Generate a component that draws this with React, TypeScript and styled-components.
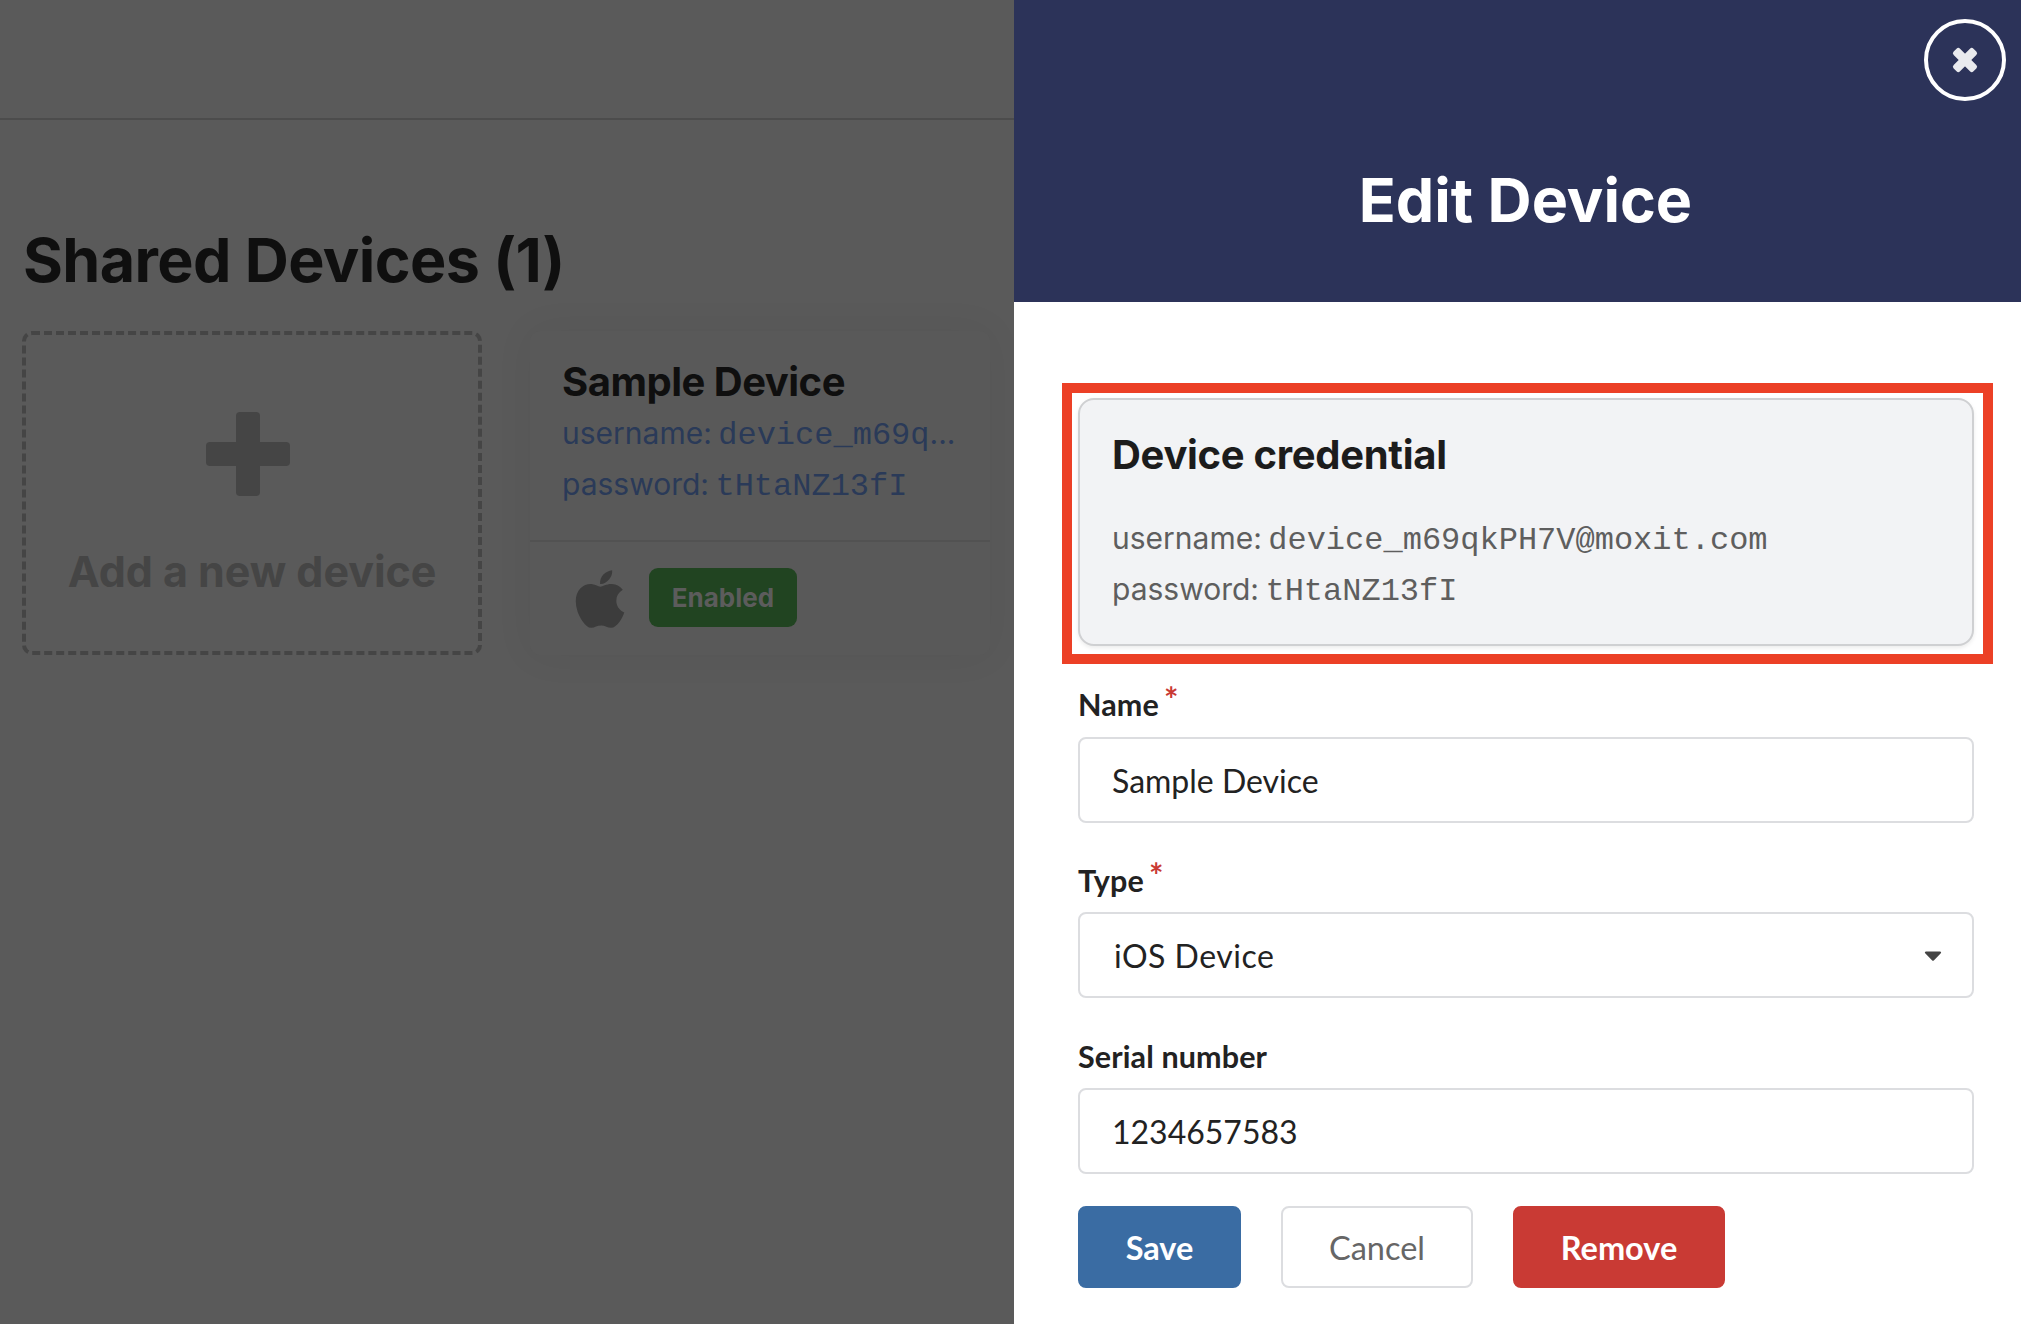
import React from "react";
import styled, { createGlobalStyle } from "styled-components";
import { FaApple, FaCaretDown } from "react-icons/fa";

const Global = createGlobalStyle`
  html, body { margin: 0; padding: 0; background: #5a5a5a; }
  * { box-sizing: border-box; }
  body { font-family: Inter, "Liberation Sans", sans-serif; }
`;

const Page = styled.div`
  display: flex;
  width: 2021px;
  height: 1324px;
  overflow: hidden;
`;

const Backdrop = styled.main`
  width: 1014px;
  flex: none;
  background: #5a5a5a;
`;

const TopBar = styled.div`
  height: 120px;
  border-bottom: 2px solid #4c4c4c;
`;

const Heading = styled.h1`
  margin: 105px 0 0 23px;
  height: 70px;
  font-size: 61px;
  line-height: 70px;
  font-weight: 700;
  letter-spacing: -0.6px;
  color: #0f0f0f;
`;

const Tiles = styled.div`
  display: flex;
  gap: 48px;
  margin: 36px 0 0 22px;
`;

const AddTile = styled.div`
  width: 460px;
  height: 324px;
  border: 4px dashed #454545;
  border-radius: 10px;
  display: flex;
  flex-direction: column;
  align-items: center;
  padding-top: 77px;
  color: #454545;
`;

const PlusIcon = styled.svg`
  width: 84px;
  height: 84px;
  margin-left: -9px;
  fill: currentColor;
`;

const AddLabel = styled.div`
  margin-top: 45px;
  font-size: 43px;
  line-height: 60px;
  font-weight: 700;
  letter-spacing: -0.05px;
`;

const DeviceCard = styled.article`
  width: 460px;
  height: 324px;
  border-radius: 10px;
  background: #595959;
  box-shadow: 0 0 40px rgba(0, 0, 0, 0.05);
  overflow: hidden;
`;

const DeviceInfo = styled.div`
  height: 211px;
  padding: 28px 20px 0 32px;
  border-bottom: 2px solid #525252;
`;

const DeviceName = styled.div`
  font-size: 40px;
  line-height: 46px;
  font-weight: 700;
  letter-spacing: -0.5px;
  color: #0f0f0f;
  margin-bottom: 3px;
`;

const CredLine = styled.div<{ $tone: string }>`
  font-size: 30px;
  line-height: 51px;
  height: 51px;
  color: ${(p) => p.$tone};
  white-space: nowrap;
`;

const Mono = styled.span`
  font-family: "Liberation Mono", monospace;
  font-size: 32px;
  line-height: 1;
  margin-left: -2px;
`;

const DeviceFooter = styled.div`
  display: flex;
  align-items: center;
  gap: 16px;
  padding: 21px 0 0 37px;
  color: #3c3c3c;
`;

const AppleIcon = styled(FaApple)`
  margin-top: 3px;
`;

const Badge = styled.div`
  width: 148px;
  height: 59px;
  border-radius: 9px;
  background: #214421;
  color: #5c5c5c;
  font-size: 26px;
  font-weight: 700;
  display: flex;
  align-items: center;
  justify-content: center;
`;

const Drawer = styled.aside`
  flex: none;
  width: 1007px;
  background: #fff;
`;

const DrawerHeader = styled.header`
  position: relative;
  height: 302px;
  background: #2c3359;
  display: flex;
  align-items: center;
  justify-content: center;
  padding: 98px 0 0 16px;
`;

const DrawerTitle = styled.h2`
  margin: 0;
  font-size: 61px;
  line-height: 70px;
  font-weight: 700;
  letter-spacing: 0;
  color: #fff;
`;

const CloseButton = styled.button`
  position: absolute;
  top: 19px;
  right: 15px;
  width: 82px;
  height: 82px;
  border-radius: 50%;
  border: 4px solid #fff;
  background: transparent;
  color: #e9eaee;
  display: flex;
  align-items: center;
  justify-content: center;
  padding: 0;
`;

const CloseIcon = styled.svg`
  width: 30px;
  height: 30px;
  fill: currentColor;
`;

const DrawerBody = styled.div`
  padding: 81px 0 0 48px;
`;

const Highlight = styled.div`
  width: 931px;
  height: 281px;
  border: 10px solid #ec4026;
  padding: 5px 9px 8px 6px;
`;

const CredentialCard = styled.section`
  height: 248px;
  width: 896px;
  border: 2px solid #cfd0d2;
  border-radius: 16px;
  background: #f2f3f5;
  box-shadow: 0 2px 4px rgba(0, 0, 0, 0.08);
  padding: 31px 32px 0 32px;
`;

const CredentialTitle = styled.h3`
  margin: 0 0 34px;
  font-size: 40px;
  line-height: 48px;
  font-weight: 700;
  letter-spacing: -0.3px;
  color: #1c1c1c;
`;

const Field = styled.div`
  margin-left: 16px;
  width: 896px;
`;

const Label = styled.label<{ $top: number; $gap: number }>`
  display: flex;
  height: 40px;
  margin-top: ${(p) => p.$top}px;
  margin-bottom: ${(p) => p.$gap}px;
  font-family: Lato, sans-serif;
  font-size: 30.5px;
  line-height: 40px;
  font-weight: 700;
  letter-spacing: 0.12px;
  color: #222;
`;

const Star = styled.span`
  color: #c93a34;
  font-size: 34px;
  line-height: 30px;
  margin-left: 5px;
`;

const Input = styled.input`
  display: block;
  width: 100%;
  height: 86px;
  border: 2px solid #dcdde0;
  border-radius: 8px;
  padding: 0 32px;
  background: #fff;
  font-family: Lato, sans-serif;
  font-size: 32px;
  color: #222;
  outline: none;
`;

const SelectBox = styled.div`
  width: 100%;
  height: 86px;
  border: 2px solid #dcdde0;
  border-radius: 8px;
  padding: 0 32px 0 34px;
  display: flex;
  align-items: center;
  justify-content: space-between;
  font-family: Lato, sans-serif;
  font-size: 32px;
  letter-spacing: 0.5px;
  color: #222;
`;

const Caret = styled(FaCaretDown)`
  color: #444;
  margin-right: -7px;
`;

const Actions = styled.div`
  display: flex;
  gap: 40px;
  margin: 32px 0 0 16px;
`;

const ActionButton = styled.button<{ $bg: string; $fg: string; $line: string; $w: number; $weight: number }>`
  width: ${(p) => p.$w}px;
  height: 82px;
  border-radius: 8px;
  border: 2px solid ${(p) => p.$line};
  background: ${(p) => p.$bg};
  color: ${(p) => p.$fg};
  font-family: Lato, sans-serif;
  font-size: 32.5px;
  font-weight: ${(p) => p.$weight};
  padding: 0;
`;

export default function App() {
  return (
    <Page>
      <Global />
      <Backdrop>
        <TopBar />
        <Heading>Shared Devices (1)</Heading>
        <Tiles>
          <AddTile>
            <PlusIcon viewBox="0 0 84 84">
              <rect x="30" y="0" width="24" height="84" rx="4" />
              <rect x="0" y="30" width="84" height="24" rx="4" />
            </PlusIcon>
            <AddLabel>Add a new device</AddLabel>
          </AddTile>
          <DeviceCard>
            <DeviceInfo>
              <DeviceName>Sample Device</DeviceName>
              <CredLine $tone="#2a3a58">
                username: <Mono>device_m69q</Mono>...
              </CredLine>
              <CredLine $tone="#2a3a58">
                password: <Mono>tHtaNZ13fI</Mono>
              </CredLine>
            </DeviceInfo>
            <DeviceFooter>
              <AppleIcon size={66} />
              <Badge>Enabled</Badge>
            </DeviceFooter>
          </DeviceCard>
        </Tiles>
      </Backdrop>
      <Drawer>
        <DrawerHeader>
          <DrawerTitle>Edit Device</DrawerTitle>
          <CloseButton aria-label="Close">
            <CloseIcon viewBox="0 0 30 30">
              <rect x="1" y="10.5" width="28" height="9" rx="2.5" transform="rotate(45 15 15)" />
              <rect x="1" y="10.5" width="28" height="9" rx="2.5" transform="rotate(-45 15 15)" />
            </CloseIcon>
          </CloseButton>
        </DrawerHeader>
        <DrawerBody>
          <Highlight>
            <CredentialCard>
              <CredentialTitle>Device credential</CredentialTitle>
              <CredLine $tone="#5e5e5e">
                username: <Mono>device_m69qkPH7V@moxit.com</Mono>
              </CredLine>
              <CredLine $tone="#5e5e5e">
                password: <Mono>tHtaNZ13fI</Mono>
              </CredLine>
            </CredentialCard>
          </Highlight>
          <Field>
            <Label $top={20} $gap={13}>
              Name<Star>*</Star>
            </Label>
            <Input readOnly value="Sample Device" />
          </Field>
          <Field>
            <Label $top={37} $gap={12}>
              Type<Star>*</Star>
            </Label>
            <SelectBox>
              iOS Device
              <Caret size={28} />
            </SelectBox>
          </Field>
          <Field>
            <Label $top={38} $gap={12}>Serial number</Label>
            <Input readOnly value="1234657583" />
          </Field>
          <Actions>
            <ActionButton $bg="#3a6ca3" $fg="#fff" $line="#3a6ca3" $w={163} $weight={700}>
              Save
            </ActionButton>
            <ActionButton $bg="#fff" $fg="#666" $line="#dcdde0" $w={192} $weight={400}>
              Cancel
            </ActionButton>
            <ActionButton $bg="#c93a34" $fg="#fff" $line="#c93a34" $w={212} $weight={700}>
              Remove
            </ActionButton>
          </Actions>
        </DrawerBody>
      </Drawer>
    </Page>
  );
}
